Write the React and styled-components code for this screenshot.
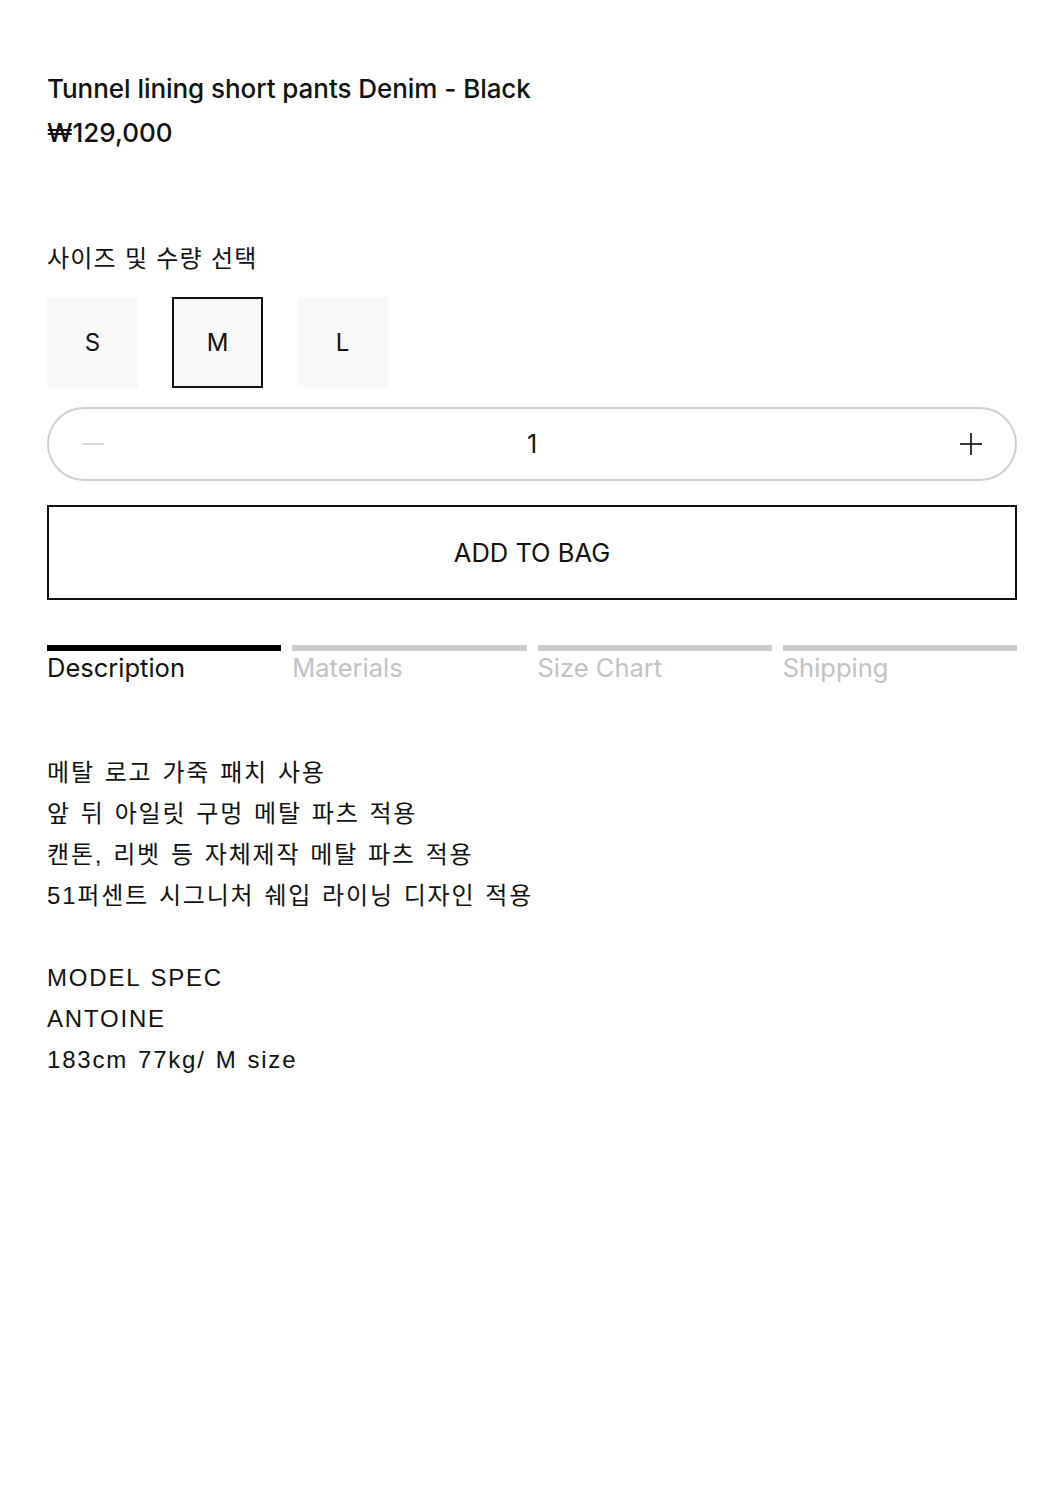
import React, { useState } from "react";
import styled, { createGlobalStyle } from "styled-components";

const GlobalStyle = createGlobalStyle`
  body {
    margin: 0;
    background: #ffffff;
    color: #111111;
    font-family: Inter, "Noto Sans CJK KR", sans-serif;
  }
`;

const Page = styled.div`
  padding: 72px 40px 0 47px;
  width: 970px;
`;

const Title = styled.h1`
  margin: 0;
  font-size: 26px;
  font-weight: 500;
  line-height: 34px;
  letter-spacing: -0.05px;
`;

const Price = styled.div`
  margin-top: 10px;
  font-size: 26px;
  font-weight: 500;
  line-height: 34px;
`;

const SectionLabel = styled.div`
  margin-top: 90px;
  font-family: "Noto Sans CJK KR", sans-serif;
  font-size: 24px;
  line-height: 34px;
  letter-spacing: 1.2px;
  word-spacing: 1.5px;
`;

const SizeRow = styled.div`
  display: flex;
  gap: 34px;
  margin-top: 23px;
`;

const SizeButton = styled.button`
  width: 91px;
  height: 91px;
  box-sizing: border-box;
  background: #f9f8f8;
  border: 2px solid ${(p) => (p.$active ? "#111" : "transparent")};
  font-family: Inter, sans-serif;
  font-size: 24px;
  color: #111;
  cursor: pointer;
  padding: 0;
`;

const Quantity = styled.div`
  margin-top: 19px;
  height: 74px;
  box-sizing: border-box;
  border: 2px solid #cfcfcf;
  border-radius: 37px;
  display: flex;
  align-items: center;
  justify-content: space-between;
  padding: 0 30px;
`;

const QtyButton = styled.button`
  width: 28px;
  height: 28px;
  padding: 0;
  border: none;
  background: transparent;
  display: flex;
  align-items: center;
  justify-content: center;
  cursor: pointer;
  color: ${(p) => (p.$disabled ? "#cfcfcf" : "#222")};
`;

const QtyValue = styled.span`
  font-size: 25px;
  font-family: Inter, sans-serif;
`;

const AddButton = styled.button`
  display: block;
  width: 100%;
  margin-top: 24px;
  height: 95px;
  box-sizing: border-box;
  border: 2px solid #111;
  background: #fff;
  font-family: Inter, sans-serif;
  font-size: 25.5px;
  color: #111;
  cursor: pointer;
`;

const Tabs = styled.div`
  display: grid;
  grid-template-columns: repeat(4, 1fr);
  gap: 11px;
  margin-top: 45px;
`;

const Tab = styled.div`
  border-top: 6px solid ${(p) => (p.$active ? "#000" : "#cccccc")};
  padding-top: 2px;
  font-size: 25.5px;
  line-height: 30px;
  color: ${(p) => (p.$active ? "#111" : "#c2c2c2")};
  cursor: pointer;
`;

const Description = styled.div`
  margin-top: 69px;
  font-family: "Liberation Sans", "Noto Sans CJK KR", sans-serif;
  font-size: 24px;
  line-height: 41px;
  letter-spacing: 1.8px;
  word-spacing: 1.5px;
  white-space: pre-line;
`;

const Minus = () => (
  <svg width="24" height="24" viewBox="0 0 24 24" fill="none" stroke="currentColor" strokeWidth="1.6">
    <line x1="1" y1="12" x2="23" y2="12" />
  </svg>
);

const Plus = () => (
  <svg width="24" height="24" viewBox="0 0 24 24" fill="none" stroke="currentColor" strokeWidth="1.8">
    <line x1="1" y1="12" x2="23" y2="12" />
    <line x1="12" y1="1" x2="12" y2="23" />
  </svg>
);

const tabs = ["Description", "Materials", "Size Chart", "Shipping"];

const text = `메탈 로고 가죽 패치 사용
앞 뒤 아일릿 구멍 메탈 파츠 적용
캔톤, 리벳 등 자체제작 메탈 파츠 적용
51퍼센트 시그니처 쉐입 라이닝 디자인 적용

MODEL SPEC
ANTOINE
183cm 77kg/ M size`;

export default function App() {
  const [size, setSize] = useState("M");
  const [qty, setQty] = useState(1);
  const [tab, setTab] = useState(0);

  return (
    <Page>
      <GlobalStyle />
      <Title>Tunnel lining short pants Denim - Black</Title>
      <Price>₩129,000</Price>

      <SectionLabel>사이즈 및 수량 선택</SectionLabel>
      <SizeRow>
        {["S", "M", "L"].map((s) => (
          <SizeButton key={s} $active={size === s} onClick={() => setSize(s)}>
            {s}
          </SizeButton>
        ))}
      </SizeRow>

      <Quantity>
        <QtyButton $disabled={qty <= 1} onClick={() => setQty(Math.max(1, qty - 1))}>
          <Minus />
        </QtyButton>
        <QtyValue>{qty}</QtyValue>
        <QtyButton onClick={() => setQty(qty + 1)}>
          <Plus />
        </QtyButton>
      </Quantity>

      <AddButton>ADD TO BAG</AddButton>

      <Tabs>
        {tabs.map((t, i) => (
          <Tab key={t} $active={tab === i} onClick={() => setTab(i)}>
            {t}
          </Tab>
        ))}
      </Tabs>

      <Description>{text}</Description>
    </Page>
  );
}
